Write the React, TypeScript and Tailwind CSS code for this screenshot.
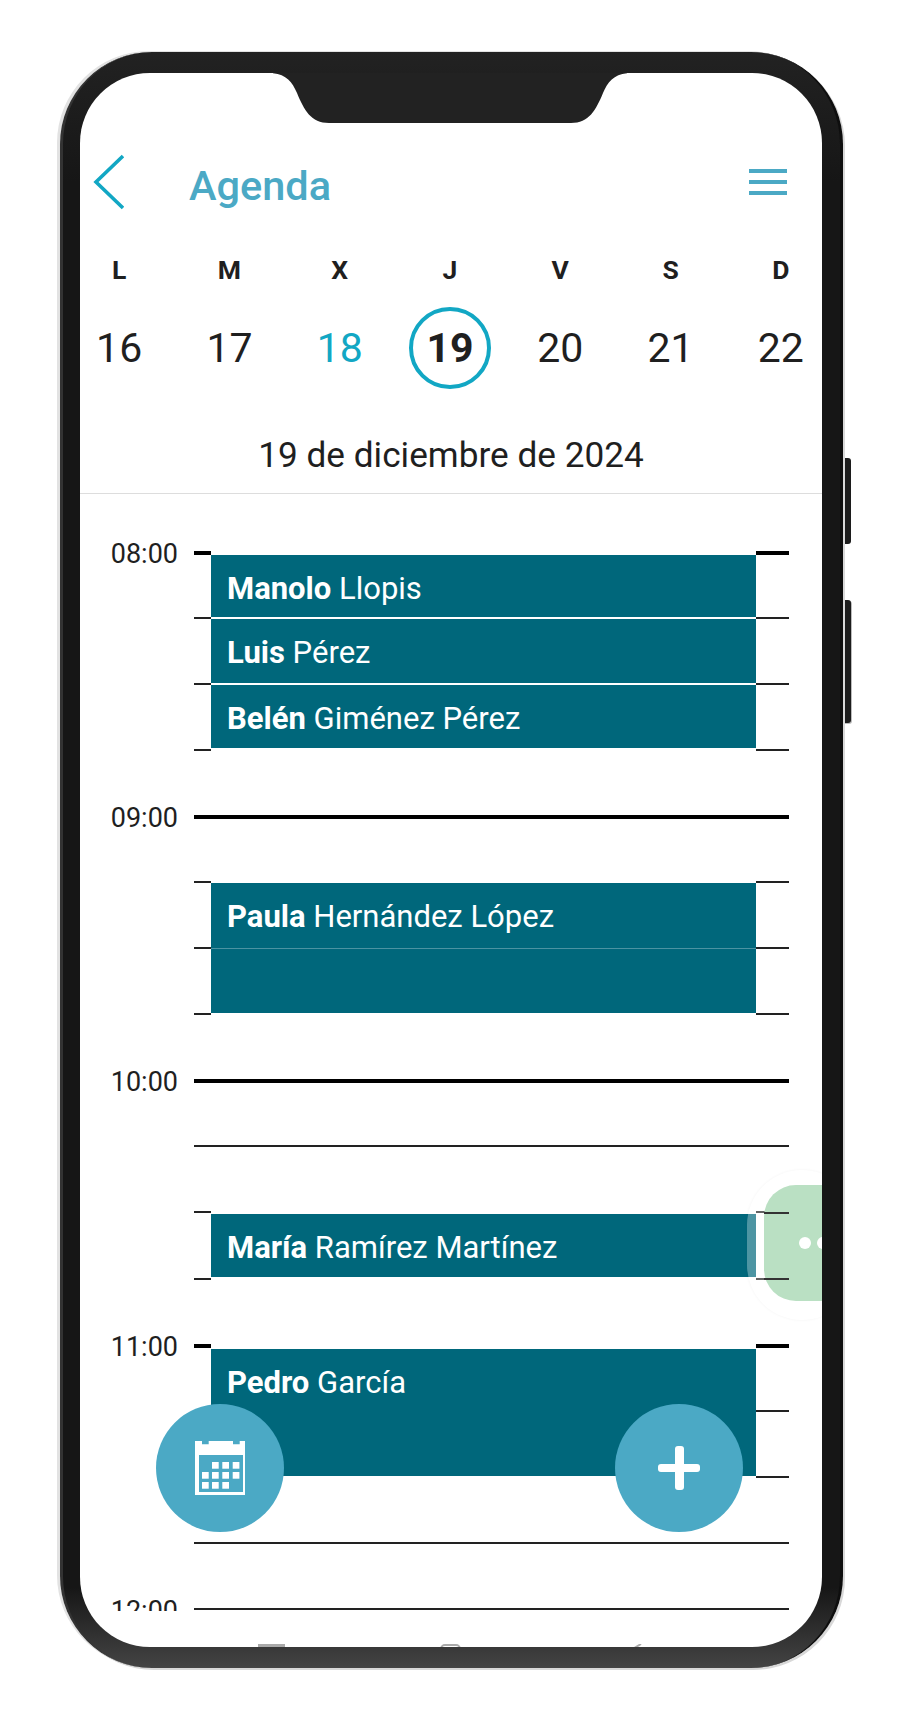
import React from 'react';

const days = [
  { label: 'L', num: '16' },
  { label: 'M', num: '17' },
  { label: 'X', num: '18', past: true },
  { label: 'J', num: '19', today: true },
  { label: 'V', num: '20' },
  { label: 'S', num: '21' },
  { label: 'D', num: '22' },
];

// each hour block is 4 rows of ~66px, the line sits in the middle of its row
const rows: { time?: string; thick?: boolean }[] = [
  { time: '08:00', thick: true }, {}, {}, {},
  { time: '09:00', thick: true }, {}, {}, {},
  { time: '10:00', thick: true }, {}, {}, {},
  { time: '11:00', thick: true }, {}, {}, {},
  { time: '12:00' },
];

const appointments = [
  { first: 'Manolo', last: 'Llopis', top: 36, height: 62 },
  { first: 'Luis', last: 'Pérez', top: 100, height: 64 },
  { first: 'Belén', last: 'Giménez Pérez', top: 166, height: 63 },
  { first: 'Paula', last: 'Hernández López', top: 364, height: 130, split: true },
  { first: 'María', last: 'Ramírez Martínez', top: 695, height: 63 },
  { first: 'Pedro', last: 'García', top: 830, height: 127 },
];

const CalendarIcon = () => (
  <svg width="50" height="54" viewBox="0 0 50 54" fill="#fff">
    <path d="M0 0H7V3.3H13.7V0H38V3.3H44.7V0H50V54H0Z" />
    <rect x="4" y="14" width="44" height="37" fill="#4ba9c5" />
    {[
      [17, 21], [27.3, 21], [37.7, 21],
      [7, 31], [17, 31], [27.3, 31], [37.7, 31],
      [7, 41], [17, 41], [27.3, 41],
    ].map(([x, y]) => (
      <rect key={`${x}-${y}`} x={x} y={y} width="6.7" height="6.7" />
    ))}
  </svg>
);

export default function App() {
  return (
    <div className="w-[900px] h-[1713px] bg-white overflow-hidden pl-[60px] pt-[52px] font-['Roboto',sans-serif]">
      <div className="relative w-[783px]">
        {/* side buttons */}
        <div className="absolute left-[781px] top-[406px] w-[10px] h-[86px] bg-[#1c1c1c] rounded-r-[3px]" />
        <div className="absolute left-[781px] top-[548px] w-[10px] h-[123px] bg-[#1c1c1c] rounded-r-[3px] shadow-[1px_1px_0_#bbb]" />

        <div className="relative w-[783px] h-[1616px] rounded-[92px] bg-[linear-gradient(180deg,#222_0%,#161616_8%,#161616_95%,#444_100%)] border-l-[3px] border-r-[3px] border-l-[#333] border-r-[#0e0e0e] pl-[17px] pr-[18px] pt-[21px] shadow-[-3px_-1px_0_#e2e2e2,2px_2px_0_#d8d8d8]">
          <div className="relative w-full h-[1574px] bg-white rounded-[70px] overflow-hidden">
            {/* notch */}
            <div className="absolute left-[193px] top-0 w-[354px] h-[50px]">
              <svg width="354" height="50" viewBox="0 0 354 50" className="block">
                <path d="M-4 0C12 0 19 8 24 20C31 37 38 50 56 50H298C316 50 323 37 330 20C335 8 342 0 358 0Z" fill="#222" />
              </svg>
            </div>

            {/* header */}
            <div className="flex items-center h-[84px] mt-[67px] pl-[13px] pr-[35px]">
              <svg width="31" height="56" viewBox="0 0 31 56" fill="none" stroke="#12a7c4" strokeWidth="3.6" className="shrink-0">
                <path d="M30 2L3 28L30 54" />
              </svg>
              <span className="ml-[65px] mt-[8px] text-[41.5px] font-medium text-[#4ba9c5] leading-none">Agenda</span>
              <div className="ml-auto flex flex-col gap-[7px]">
                <div className="w-[38px] h-[4px] bg-[#4ba9c5]" />
                <div className="w-[38px] h-[4px] bg-[#4ba9c5]" />
                <div className="w-[38px] h-[4px] bg-[#4ba9c5]" />
              </div>
            </div>

            {/* week */}
            <div className="grid grid-cols-7 mt-[32px] w-[772px] -ml-[16px]">
              {days.map(d => (
                <div key={d.label} className="flex flex-col items-center">
                  <span className="text-[26.5px] leading-[28px] font-bold text-[#1f1f1f]">{d.label}</span>
                  <div
                    className={`mt-[23px] w-[82px] h-[82px] pt-[2px] rounded-full flex items-center justify-center text-[41px] ${
                      d.today ? 'border-[4px] border-[#12a7c4] font-bold text-[#1f1f1f]' : d.past ? 'text-[#12a7c4]' : 'text-[#1f1f1f]'
                    }`}
                  >
                    {d.num}
                  </div>
                </div>
              ))}
            </div>

            <div className="mt-[46px] text-center text-[35.2px] leading-[40px] text-[#1f1f1f]">19 de diciembre de 2024</div>
            <div className="mt-[18px] h-[1px] bg-[#ddd]" />

            {/* timeline */}
            <div className="relative mt-[25px] h-[1092px] overflow-hidden">
              {rows.map((r, i) => (
                <div key={i} className="grid grid-cols-[98px_595px] gap-x-[16px] items-center h-[66.06px]">
                  <span className="text-right text-[27px] text-[#1f1f1f] leading-none pt-[5px]">{r.time}</span>
                  <div className={r.thick ? 'h-[4px] mt-[2px] bg-black' : 'h-[2px] bg-[#222]'} />
                </div>
              ))}

              {/* white backing hides the grid line behind a block, the block itself stays above its neighbours' backing */}
              {appointments.map(a => (
                <div
                  key={a.first}
                  className="absolute left-[131px] w-[545px] bg-white py-[6px]"
                  style={{ top: a.top - 6, height: a.height + 12 }}
                >
                  <div className="relative z-10 bg-[#00677b] text-white text-[31px]" style={{ height: a.height }}>
                    <div className="h-[62px] pt-[6px] pl-[16px] flex items-center">
                      <span><b className="font-bold">{a.first}</b> {a.last}</span>
                    </div>
                    {a.split && <div className="h-[1px] mt-[3px] bg-[#4b93a2]" />}
                  </div>
                </div>
              ))}
            </div>

            {/* home bar, cut off by the frame */}
            <div className="flex items-start pt-[33px]">
              <div className="ml-[178px] w-[27px] h-[5px] bg-[#aaa]" />
              <div className="ml-[155px] w-[21px] h-[8px] border-2 border-[#aaa] rounded-t-[5px]" />
              <svg width="14" height="6" viewBox="0 0 14 6" className="ml-[168px]" fill="none" stroke="#aaa" strokeWidth="2">
                <path d="M12 0L2 6" />
              </svg>
            </div>

            {/* floating buttons */}
            <div className="absolute z-20 left-[76px] top-[1331px] w-[128px] h-[128px] rounded-full bg-[#4ba9c5] flex items-center justify-center">
              <CalendarIcon />
            </div>
            <div className="absolute z-20 left-[535px] top-[1331px] w-[128px] h-[128px] rounded-full bg-[#4ba9c5] flex items-center justify-center">
              <div className="relative w-[42px] h-[44px]">
                <div className="absolute left-[17px] top-0 w-[9px] h-[44px] rounded-[3px] bg-white" />
                <div className="absolute left-0 top-[18px] w-[42px] h-[8px] rounded-[3px] bg-white" />
              </div>
            </div>

            {/* side handle */}
            <div className="absolute z-20 left-[667px] top-[1097px] w-[110px] h-[150px] rounded-[75px] bg-white/30 shadow-[0_0_3px_rgba(0,0,0,0.05)]" />
            <div className="absolute z-20 left-[684px] top-[1112px] w-[90px] h-[116px] rounded-[32px] bg-[#bae0c3] flex items-center pl-[35px] gap-[6px]">
              <div className="w-[12px] h-[12px] rounded-full bg-white shrink-0" />
              <div className="w-[12px] h-[12px] rounded-full bg-white shrink-0" />
              <div className="absolute left-0 top-[27px] w-[25px] h-[2px] bg-[#333]" />
              <div className="absolute left-0 top-[93px] w-[25px] h-[2px] bg-[#333]" />
            </div>
          </div>
        </div>
      </div>
    </div>
  );
}
